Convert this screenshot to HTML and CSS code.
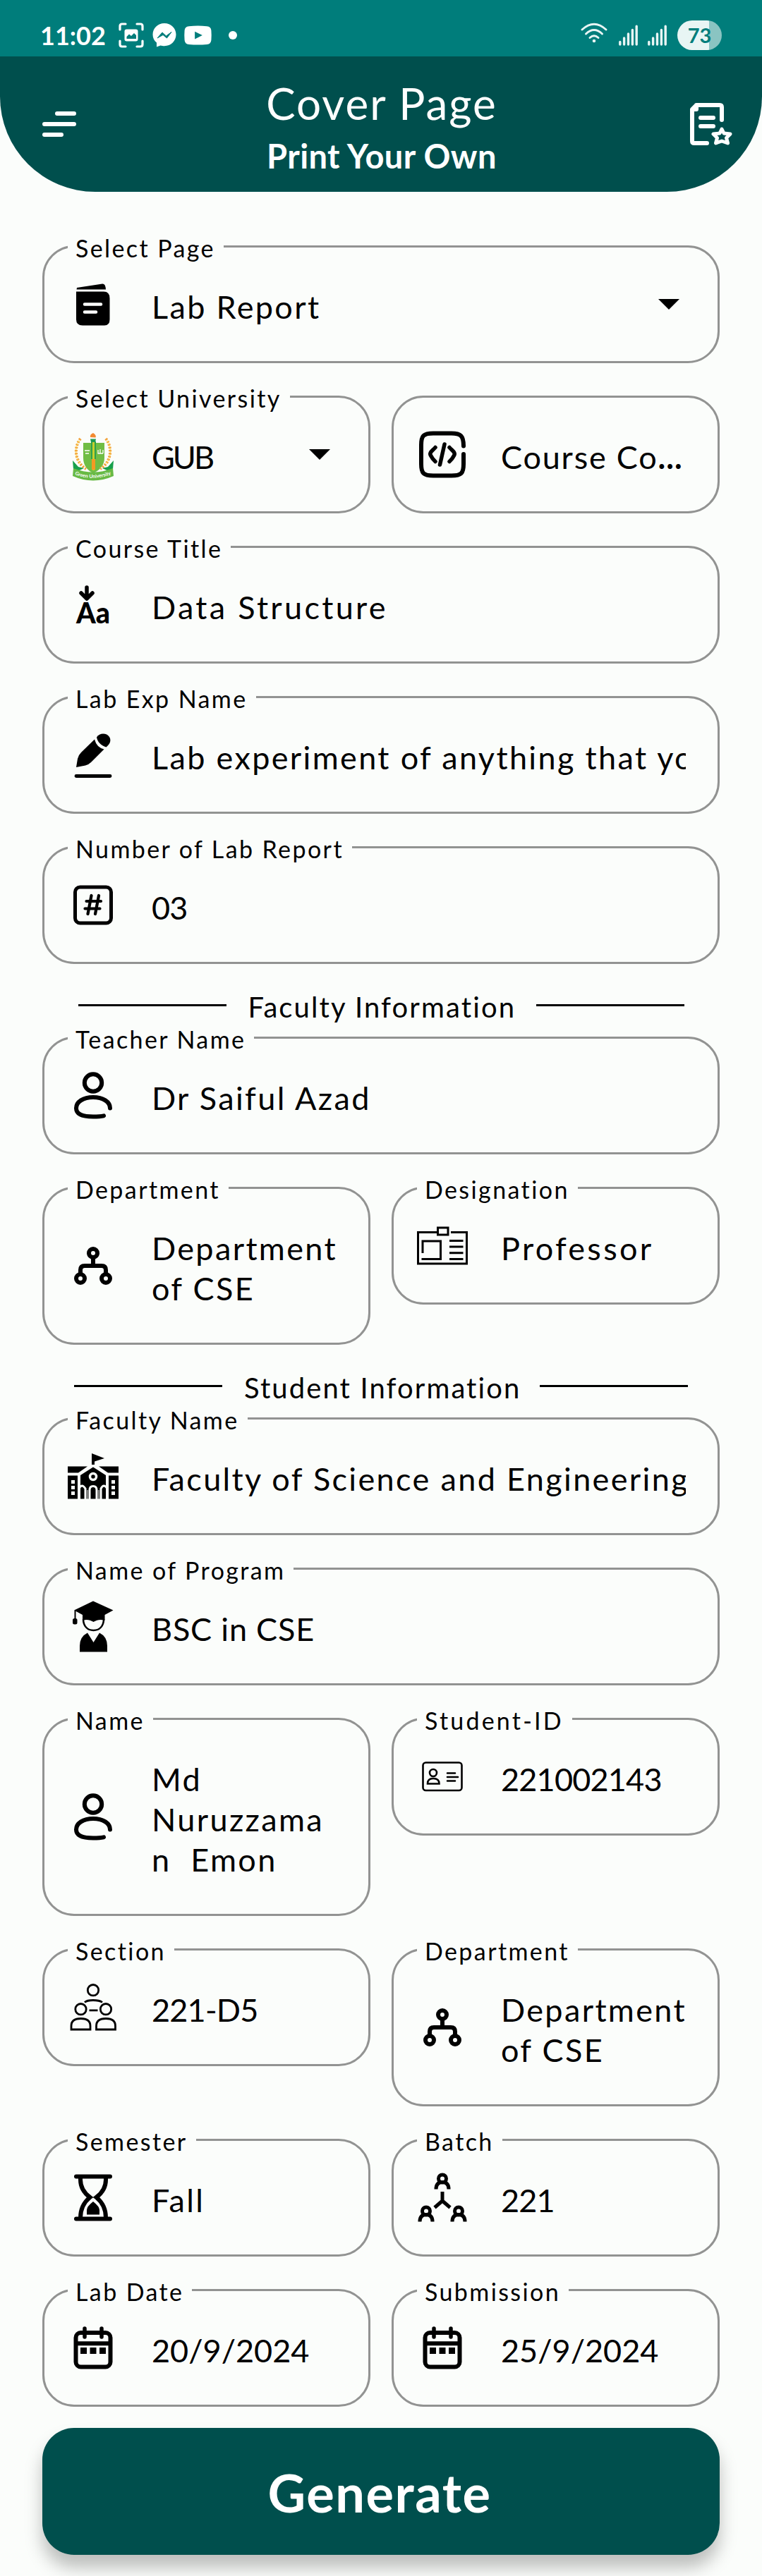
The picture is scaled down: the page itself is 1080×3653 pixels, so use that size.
FILE: index.html
```
<!DOCTYPE html>
<html lang="en">
<head>
<meta charset="utf-8">
<title>Cover Page</title>
<link rel="stylesheet" href="styles.css">
</head>
<body>
<svg class="defs" aria-hidden="true">
  <symbol id="person" viewBox="0 0 72 72"><g fill="none" stroke="#000" stroke-width="6" stroke-linecap="round"><circle cx="36" cy="17.500" r="12.200"/><path d="M60 53.500C60 44.500 50 38 36 38S12 44.500 12 53.500C12 62.500 21 65.500 36 65.500C43 65.500 48 65 51 64.300"/></g></symbol>
  <symbol id="network" viewBox="0 0 72 72"><g fill="none" stroke="#000" stroke-width="6"><circle cx="36" cy="18" r="6"/><circle cx="18" cy="54" r="6"/><circle cx="54" cy="54" r="6"/><path d="M36 24V36M18 48V42Q18 36 24 36H48Q54 36 54 42V48"/></g></symbol>
  <symbol id="calendar" viewBox="0 0 72 72"><rect x="11.500" y="14" width="49" height="48.500" rx="7" fill="none" stroke="#000" stroke-width="6"/><path d="M11 29.300H61" stroke="#000" stroke-width="6"/><path d="M24 8V20M48 8V20" stroke="#000" stroke-width="5.500" stroke-linecap="round"/><path d="M18 35h9v9h-9zM31.500 35h9v9h-9zM45 35h9v9h-9z"/></symbol>
  <symbol id="signal" viewBox="0 0 27 30"><path d="M1.800 24.500V28M7.600 19V28M13.500 13V28M19.400 7.500V28M25.200 2.200V28" fill="none" stroke="#e8f5f4" stroke-width="3.400" stroke-linecap="round"/></symbol>
  <symbol id="member" viewBox="0 0 24 24"><circle cx="12" cy="8.500" r="5.500" fill="none" stroke="#000" stroke-width="5"/><path d="M3 23.500C3 17 6 13.500 12 13.500S21 17 21 23.500" fill="none" stroke="#000" stroke-width="5"/></symbol>
</svg>

<div class="statusbar">
  <span class="clock">11:02</span>
  <svg class="st-shot" viewBox="0 0 36 36"><path d="M2 10V5Q2 2 5 2H10M26 2H31Q34 2 34 5V10M34 26V31Q34 34 31 34H26M10 34H5Q2 34 2 31V26" fill="none" stroke="#fff" stroke-width="3.200" stroke-linecap="round"/><rect x="8.500" y="9.500" width="19" height="17" rx="3" fill="#fff"/><path d="M11.500 23V20L15 16.500L18 19L22 15L25 18V23Z" fill="#007d7b"/></svg>
  <svg class="st-msg" viewBox="0 0 34 34"><path d="M17 0C7.500 0 .5 7 .5 16C.5 21 2.500 24.500 6 27.500V33.500L11.500 31.500C13 32 15 32.200 17 32.200C26.500 32.200 33.500 25 33.500 16S26.500 0 17 0Z" fill="#fff"/><path d="M7 21L14 13L19.500 18L27 12.500L20.500 21L15 16.500Z" fill="#007d7b" stroke="#007d7b" stroke-linejoin="round"/></svg>
  <svg class="st-yt" viewBox="0 0 40 28"><path d="M7 .8Q20 -.6 33 .8Q39 1.200 39.400 7Q40 14 39.400 21Q39 27 33 27.300Q20 28.500 7 27.300Q1 27 .6 21Q0 14 .6 7Q1 1.200 7 .8Z" fill="#fff"/><path d="M15.500 8.500L26.500 14L15.500 19.700Z" fill="#007d7b"/></svg>
  <span class="dot"></span>
  <svg class="st-wifi" viewBox="0 0 38 30"><g fill="none" stroke="#e8f5f4" stroke-width="3" stroke-linecap="round"><path d="M2 10Q19 -5.500 36 10"/><path d="M7.500 16Q19 5 30.500 16"/><path d="M13 21.500Q19 16 25 21.500"/></g><circle cx="19" cy="26" r="2.300" fill="#e8f5f4"/></svg>
  <svg class="st-sig"><use href="#signal"/></svg>
  <svg class="st-sig st-sig2"><use href="#signal"/></svg>
  <span class="battery">73</span>
</div>

<header class="header">
  <svg class="menu" viewBox="0 0 48 36"><path d="M21 3H45M3 18H45M3 33H27" stroke="#fff" stroke-width="6" stroke-linecap="round"/></svg>
  <div class="titles"><h1>Cover Page</h1><p>Print Your Own</p></div>
  <svg class="saved" viewBox="0 0 60 60"><g fill="none" stroke="#fff" stroke-width="6" stroke-linecap="round" stroke-linejoin="round"><path d="M24 57H6Q3 57 3 54V9L9 3H42Q45 3 45 6V24M3.500 9H9V3"/><path d="M15 21H33M15 33H33"/><path d="M45 37L48 43L57 44L51.500 49.500L53.500 57L45 54L36.500 57L38.500 49.500L33 44L42 43Z" stroke-width="5"/></g></svg>
</header>

<main class="form">
  <div class="row"><div class="field"><span class="label">Select Page</span>
    <svg class="icon" viewBox="0 0 72 72"><path d="M13 12L49 6.500Q53.500 6 54 14.500H12.500Z"/><path d="M12 17.500H51Q59.500 17.500 59.500 27V57Q59.500 65.500 52 65.500H21Q12 65.500 12 57Z"/><path d="M24 35.500H47M24 46.500H40" stroke="#fbfdfb" stroke-width="4.500" stroke-linecap="round"/></svg>
    <span class="value">Lab Report</span><i class="arrow"></i></div></div>

  <div class="row"><div class="field"><span class="label">Select University</span>
    <svg class="icon" viewBox="0 0 72 72"><path d="M22 19H36V62Q22 55 22 40Z" fill="#70bd45"/><path d="M36 19H52V40Q52 55 36 62Z" fill="#70bd45"/><path d="M18 13C8 26 10 46 26 56M54 13C64 26 62 46 46 56" fill="none" stroke="#f2a43c" stroke-width="4" stroke-dasharray="2.500 1.800"/><path d="M16 16C9 28 11 40 18 49M56 16C63 28 61 40 54 49" fill="none" stroke="#ffe26a" stroke-width="1.500" stroke-dasharray="2 2"/><path d="M33 17H40V42H33Z" fill="#2fa04c"/><path d="M35 17H38V58H35Z" fill="#c8cf2c"/><path d="M34 42H39V57H34Z" fill="#f59a23"/><path d="M32 13.500H40L39 18H33Z" fill="#1f9b51"/><path d="M32 11Q31 7 36 5Q41 8 39.500 11.500Z" fill="#f28a32"/><path d="M24 30H31M25 34H30M43 29V34H50M46 28V34M50 29V34" fill="none" stroke="#fff" stroke-width="1.300"/><path d="M7 44L15 53L23 55L12 60L8 56Z" fill="#17a04b"/><path d="M65 44L57 53L49 55L60 60L64 56Z" fill="#17a04b"/><path d="M8 55Q36 66 64 55L65 66Q36 79 7 66Z" fill="#68ba45"/><path id="ribbon" d="M10 64Q36 74 63 63" fill="none"/><text class="crest-text"><textPath href="#ribbon">Green University</textPath></text></svg>
    <span class="value gub">GUB</span><i class="arrow"></i></div>
   <div class="field">
    <svg class="icon" viewBox="0 0 72 72"><g fill="none" stroke="#000" stroke-width="6" stroke-linecap="round" stroke-linejoin="round"><path d="M66 23.500C66 9 62 5.500 49 5.500H23C9 5.500 6 9 6 22V49C6 62 9 65.500 23 65.500H49C63 65.500 66 62 66 49V35"/><path d="M26 25.500C21 31 17 33 19.500 37Q22 42 26 45.500M46 25.500C51 31 55 33 52.500 37Q50 42 46 45.500M39 21L32.500 50" stroke-width="5.500"/></g></svg>
    <span class="value course">Course Co<b class="more">...</b></span></div></div>

  <div class="row"><div class="field"><span class="label">Course Title</span>
    <svg class="icon" viewBox="0 0 72 72"><path d="M27 11V26M19 19L27 27L35 19" fill="none" stroke="#000" stroke-width="5.500" stroke-linecap="round" stroke-linejoin="round"/><text class="aa" x="12" y="62" textLength="48" lengthAdjust="spacingAndGlyphs">Aa</text></svg>
    <span class="value wide">Data Structure</span></div></div>

  <div class="row"><div class="field"><span class="label">Lab Exp Name</span>
    <svg class="icon" viewBox="0 0 72 72"><path d="M12 53L14 41Q15 36 19 32L38 13.500Q41 25 51.500 27.500L33 46Q30 49 25 50.500Z"/><path d="M41 10.500C45 4 55 4 59 10C62 15 60 20 54.500 24.500C47 22 42 17 41 10.500Z"/><path d="M12 65.500H60" stroke="#000" stroke-width="4.800" stroke-linecap="round"/></svg>
    <span class="value">Lab experiment of anything that you</span></div></div>

  <div class="row"><div class="field"><span class="label">Number of Lab Report</span>
    <svg class="icon" viewBox="0 0 72 72"><g fill="none" stroke="#000" stroke-linecap="round"><rect x="10.500" y="10" width="51" height="51" rx="7" stroke-width="5"/><path d="M33.500 22L28.500 48M44 22L39 48M26.500 30H47M24.500 40.500H45.500" stroke-width="4.200"/></g></svg>
    <span class="value digits">03</span></div></div>

  <div class="divider"><hr><span>Faculty Information</span><hr></div>

  <div class="row"><div class="field"><span class="label">Teacher Name</span>
    <svg class="icon"><use href="#person"/></svg><span class="value">Dr Saiful Azad</span></div></div>

  <div class="row"><div class="field"><span class="label">Department</span>
    <svg class="icon"><use href="#network"/></svg><span class="value">Department<br>of CSE</span></div>
   <div class="field"><span class="label">Designation</span>
    <svg class="icon" viewBox="0 0 72 72"><g fill="none" stroke="#000" stroke-width="3"><path d="M28 16.500H1.500V61H70.500V16.500H48"/><path d="M29.500 10H44V20H29.500Z"/><path d="M8 46V29H33.500V54.500H6.500"/><path d="M46 28.500H65.500M46 37H65.500M46 45.800H65.500M46 54.500H65.500"/></g></svg>
    <span class="value wide">Professor</span></div></div>

  <div class="divider student"><hr><span>Student Information</span><hr></div>

  <div class="row"><div class="field"><span class="label">Faculty Name</span>
    <svg class="icon" viewBox="0 0 72 72"><path d="M34 3L52 10L38 14.500V19H34Z"/><path d="M0 21.500H28L15 30.500H0ZM72 21.500H44L57 30.500H72Z"/><path d="M0 34.500H14V67.500H0ZM58 34.500H72V67.500H58Z"/><path d="M5 41h5v5h-5zM5 49h5v5h-5zM5 57h5v5h-5zM62 41h5v5h-5zM62 49h5v5h-5zM62 57h5v5h-5z" fill="#fbfdfb"/><path d="M18 34L36 22.500L54 34V67.500H18Z"/><circle cx="36" cy="36" r="4.500" fill="none" stroke="#fbfdfb" stroke-width="3.500"/><path d="M16 53Q20 45 25 53V68M31 68V55Q31 49.500 36 49.500T41 55V68M47 68V53Q51 45 56 53" fill="none" stroke="#fbfdfb" stroke-width="3"/><path d="M28 55V68M44 55V68" stroke="#fbfdfb" stroke-width="1"/></svg>
    <span class="value">Faculty of Science and Engineering</span></div></div>

  <div class="row"><div class="field"><span class="label">Name of Program</span>
    <svg class="icon" viewBox="0 0 72 72"><path d="M36 -.5L64.500 12.500L52.500 19V27C46 25 42 26 36.500 29C31 26 27 25 21 27V19L9 12.500Z"/><path d="M22 25C22 35 28 41 36.500 41S51 35 51 25" fill="none" stroke="#000" stroke-width="2.500"/><path d="M10.500 13V25" stroke="#000" stroke-width="2"/><rect x="7" y="24" width="6.500" height="8.500" rx="2.500"/><path d="M28 44.500L36.500 58L45 44.500Q56 50 56 63V71.500H17V63Q17 50 28 44.500Z"/></svg>
    <span class="value caps">BSC in CSE</span></div></div>

  <div class="row"><div class="field"><span class="label">Name</span>
    <svg class="icon"><use href="#person"/></svg><span class="value">Md<br>Nuruzzama<br>n&nbsp; Emon</span></div>
   <div class="field"><span class="label open">Student-ID</span>
    <svg class="icon" viewBox="0 0 72 72"><g fill="none" stroke="#000" stroke-width="2.600"><rect x="8.500" y="15.500" width="55" height="39.500" rx="4"/><circle cx="23" cy="30" r="5"/><path d="M15 45.500C15 40 18 38 23 38S31.500 40 31.500 45.500ZM43 30.500H54M43 36H58M43 41.500H54" stroke-linecap="round"/></g></svg>
    <span class="value digits">221002143</span></div></div>

  <div class="row"><div class="field"><span class="label">Section</span>
    <svg class="icon" viewBox="0 0 72 72"><g fill="none" stroke="#000" stroke-width="2.800"><circle cx="36" cy="11.200" r="7.700"/><circle cx="18.500" cy="38.200" r="7.700"/><circle cx="54" cy="38.200" r="7.700"/><path d="M24 28.500Q27 25.500 36 25.500T49 28.500M30.500 39.800H42.500M5 67V62Q5 51.500 18.500 51.500T32 62V67ZM40.500 67V62Q40.500 51.500 54 51.500T67.500 62V67Z"/></g></svg>
    <span class="value digits">221-D5</span></div>
   <div class="field"><span class="label">Department</span>
    <svg class="icon"><use href="#network"/></svg><span class="value">Department<br>of CSE</span></div></div>

  <div class="row"><div class="field"><span class="label">Semester</span>
    <svg class="icon" viewBox="0 0 72 72"><path d="M12 5.500H60M12 65.500H60" stroke="#000" stroke-width="6" stroke-linecap="round"/><path d="M18 7V10Q18 25 31.500 35Q18 46 18 64M54 7V10Q54 25 40.500 35Q54 46 54 64" fill="none" stroke="#000" stroke-width="6"/><path d="M36 41Q45 48 45 53V59.500H27V53Q27 48 36 41Z"/></svg>
    <span class="value">Fall</span></div>
   <div class="field"><span class="label">Batch</span>
    <svg class="icon" viewBox="0 0 72 72"><use href="#member" x="24" y="0" width="24" height="24"/><use href="#member" x="1" y="46" width="24" height="24"/><use href="#member" x="47" y="46" width="24" height="24"/><path d="M36 27V40L25 49.500M36 40L47 49.500" fill="none" stroke="#000" stroke-width="5"/></svg>
    <span class="value digits">221</span></div></div>

  <div class="row"><div class="field"><span class="label">Lab Date</span>
    <svg class="icon"><use href="#calendar"/></svg><span class="value date">20/9/2024</span></div>
   <div class="field"><span class="label">Submission</span>
    <svg class="icon"><use href="#calendar"/></svg><span class="value date">25/9/2024</span></div></div>

  <button class="generate">Generate</button>
</main>
</body>
</html>
```
FILE: styles.css
```
* { box-sizing: border-box; }
body { margin: 0; width: 1080px; height: 3653px; overflow: hidden; background: #fbfdfb; color: #000; font-family: Lato, "Open Sans", sans-serif; }
.defs { display: none; }
svg { display: block; flex: none; overflow: visible; }

.statusbar { height: 80px; padding: 20px 57px 0; background: #007d7b; color: #fff; display: flex; align-items: center; }
.clock { width: 111px; font-size: 36px; font-weight: 700; line-height: 60px; }
.st-shot { width: 36px; height: 36px; }
.st-msg { width: 34px; height: 34px; margin-left: 12px; }
.st-yt { width: 39px; height: 28px; margin-left: 11px; }
.dot { width: 12px; height: 12px; margin-left: 24px; border-radius: 50%; background: #fff; }
.st-wifi { width: 38px; height: 30px; margin: -6px 0 0 auto; }
.st-sig { width: 27px; height: 30px; margin-left: 16px; }
.st-sig2 { margin-left: 14px; }
.battery { width: 63px; height: 42px; margin-left: 15px; border-radius: 21px; background: linear-gradient(90deg, #e8f5f4 45px, #8ac4c2 45px); color: #007d7b; font-size: 29px; font-weight: 700; line-height: 41px; text-align: center; }

.header { height: 192px; padding: 0 42px 0 60px; background: #004f4d; border-radius: 0 0 135px 135px; color: #fff; display: flex; justify-content: space-between; align-items: flex-start; }
.menu { width: 48px; height: 36px; margin-top: 78px; }
.saved { width: 60px; height: 60px; margin-top: 66px; }
.titles { width: 340px; padding-top: 26px; margin-right: 4px; text-align: center; white-space: nowrap; }
.titles h1 { margin: 0; font-size: 62px; font-weight: 400; line-height: 80px; letter-spacing: 2px; }
.titles p { margin: 5px 0 0; font-size: 47px; font-weight: 700; line-height: 60px; letter-spacing: .4px; }

.form { padding: 76px 60px 0; display: flex; flex-direction: column; }
.row { display: grid; grid-auto-flow: column; grid-auto-columns: minmax(0, 1fr); gap: 30px; align-items: start; margin-bottom: 46px; }
.row:last-of-type { margin-bottom: 30px; }
.field { position: relative; min-height: 167px; padding: 52px 45px 52px 33px; border: 3px solid #929392; border-radius: 45px; display: flex; align-items: center; }
.label { position: absolute; left: 33px; top: -22px; padding: 0 12px 0 11px; background: #fbfdfb; font-size: 34px; line-height: 46px; letter-spacing: 2.4px; white-space: nowrap; }
.open { letter-spacing: 3.2px; }
.icon { width: 72px; height: 72px; margin-top: -10px; margin-bottom: -10px; }
.value { flex: 1; min-width: 0; margin-left: 47px; padding-top: 4px; margin-bottom: -4px; overflow: hidden; white-space: nowrap; font-size: 45px; line-height: 57px; letter-spacing: 2.35px; }
.wide { letter-spacing: 3.3px; }
.digits { letter-spacing: -.8px; }
.date { letter-spacing: 0; }
.caps { letter-spacing: .8px; }
.gub { letter-spacing: -3px; }
.course { letter-spacing: 1.8px; }
.more { letter-spacing: 1px; }
.arrow { width: 30px; height: 15px; margin-right: 9px; background: #000; clip-path: polygon(0 0, 100% 0, 50% 100%); }
.crest-text { fill: #fff; font-size: 7px; font-weight: 700; }
.aa { font-size: 41px; font-weight: 900; }

.divider { height: 57px; padding-bottom: 27px; display: flex; align-items: center; justify-content: center; gap: 31px; }
.divider hr { width: 210px; height: 3px; margin: 0 0 5px; border: 0; background: #000; }
.divider span { width: 377px; text-align: center; font-size: 40px; line-height: 30px; white-space: nowrap; letter-spacing: 2.1px; }
.student span { width: 388px; }

.generate { height: 180px; padding: 3px 8px 0 4px; border: 0; border-radius: 45px; background: #004f4d; box-shadow: 0 18px 24px rgba(0, 0, 0, .25); color: #fff; font: 700 74px/76px Lato, "Open Sans", sans-serif; letter-spacing: 1.5px; }
```
